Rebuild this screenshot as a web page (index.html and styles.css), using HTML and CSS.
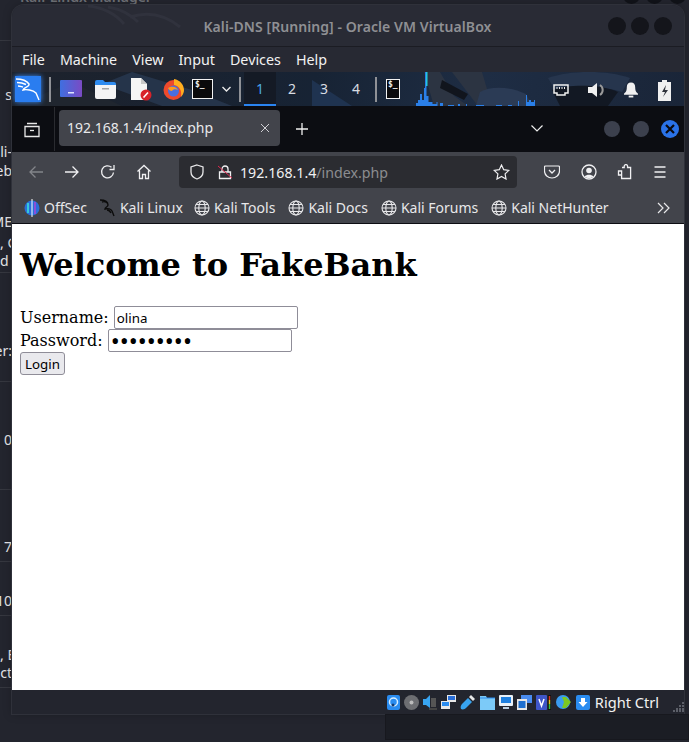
FILE: index.html
```html
<!DOCTYPE html>
<html lang="en">
<head>
<meta charset="utf-8">
<title>Kali-DNS</title>
<link rel="stylesheet" href="styles.css">
</head>
<body>
<div class="desktop">
  <div class="back-title">Kali-Linux Manager</div>
  <div class="back-text t1"><span>s</span></div>
  <div class="back-text t2"><span>ali-</span></div>
  <div class="back-text t3"><span>eb</span></div>
  <div class="back-text t4"><span>ME</span></div>
  <div class="back-text left t5"><span>, C</span></div>
  <div class="back-text left t6"><span>d P</span></div>
  <div class="back-text t7"><span>er:</span></div>
  <div class="back-text t8"><span>: 0</span></div>
  <div class="back-text t9"><span>7</span></div>
  <div class="back-text t10"><span>10</span></div>
  <div class="back-text left t11"><span>, E</span></div>
  <div class="back-text t12"><span>nct</span></div>
  <div class="back-rule r1"></div>
  <div class="back-rule r2"></div>
  <div class="back-rule r3"></div>
  <div class="back-rule r4"></div>
  <div class="back-rule r5"></div>
  <div class="back-rule r6"></div>
  <div class="back-rule r7"></div>
  <div class="back-dots"><i></i><i></i><i></i></div>

  <div class="vm-window">
    <header class="titlebar">
      <svg class="watermark" width="200" height="42" viewBox="0 0 200 42"><path d="M76 1c14 1 28 8 36 18M96 2c12 2 22 7 30 15M118 12c16-5 34-3 50 10" fill="none" stroke="#30323d" stroke-width="3"/></svg>
      <span class="title-text">Kali-DNS [Running] - Oracle VM VirtualBox</span>
      <div class="win-dots"><i></i><i></i><i></i></div>
    </header>
    <nav class="menubar">
      <span>File</span><span>Machine</span><span>View</span><span>Input</span><span>Devices</span><span>Help</span>
    </nav>
    <div class="panel">
      <svg class="panel-art" width="672" height="34" viewBox="0 0 672 34"><path d="M120 0l60 18 40 16h-70L90 12z" fill="#25344a"/><path d="M2 34L60 10l50 24z" fill="#20262f"/><path d="M300 8l40 26h-40z" fill="#1f3350"/><path d="M412 0h16l14 24 14 10h-34zM440 0h30l10 34h-14z" fill="#2c3442"/><path d="M430 8l26 14-4 6-24-12z" fill="#11151d"/><path d="M468 20c10-6 30-6 46 2l6 12h-56z" fill="#2b3b55"/><path d="M536 6c22-8 60-8 82 0l-8 14c-18-6-46-6-66 0z" fill="#26354d"/><path d="M540 18c16-6 50-6 66 2l-10 14h-48z" fill="#121823"/></svg>
      <span class="kali-btn">
        <svg width="26" height="26" viewBox="0 0 26 26"><path d="M1 3c6 0 11 2 13 5 1 3-5 3-6 6 3-1 10 0 13 3l3 7M2 6.500c3 0 6 .5 9 2M3 10c2 0 3 .5 5 1" fill="none" stroke="#fff" stroke-width="1.400"/></svg>
      </span>
      <span class="panel-sep"></span>
      <span class="launch l1">
        <svg width="23" height="18" viewBox="0 0 23 18"><defs><linearGradient id="lg1" x1="0" x2="1"><stop offset="0" stop-color="#3f6fe0"/><stop offset="1" stop-color="#7a4bc4"/></linearGradient></defs><rect width="22" height="17" rx="1" fill="url(#lg1)"/><rect x="8" y="12" width="6" height="1.500" fill="#dfe4ff"/></svg>
      </span>
      <span class="launch l2">
        <svg width="23" height="20" viewBox="0 0 23 20"><path d="M1 3q0-2 2-2h6l2 2h9q2 0 2 2v2H1z" fill="#2f8cf0"/><path d="M1 6h21v12q0 2-2 2H3q-2 0-2-2z" fill="#f4f4f4"/><rect x="8" y="9" width="7" height="1.500" fill="#a5a5a5"/></svg>
      </span>
      <span class="launch l3">
        <svg width="23" height="23" viewBox="0 0 23 23"><path d="M1 0h10l6 6v16H1z" fill="#f5f5f5"/><path d="M11 0l6 6h-6z" fill="#c9c9c9"/><circle cx="16" cy="17" r="5.500" fill="#d8232a"/><path d="M13.500 19.500l4.500-5" stroke="#fff" stroke-width="1.600"/></svg>
      </span>
      <span class="launch l4">
        <svg width="23" height="23" viewBox="0 0 23 23"><circle cx="10.500" cy="12" r="10" fill="#ee4a2c"/><path d="M11 1c6 1 10 6 10 11 0 2-1 5-3 7 1-6-1-11-7-12z" fill="#ffae1f"/><circle cx="10.500" cy="13" r="5.500" fill="#4a6ee0"/><path d="M5 10c3-2 8-2 10 2-2-1-5-1-6 1-2 0-3-1-4-3z" fill="#ff9a1f"/></svg>
      </span>
      <span class="term-ico launch-term">$_</span>
      <svg class="chev" width="9" height="6" viewBox="0 0 9 6"><path d="M.5 1l4 4 4-4" fill="none" stroke="#e8e8e8" stroke-width="1.400"/></svg>
      <span class="panel-sep sep2"></span>
      <span class="ws active">1</span><span class="ws">2</span><span class="ws">3</span><span class="ws">4</span>
      <span class="panel-sep sep3"></span>
      <span class="term-ico narrow">$_</span>
      <svg class="graph" width="125" height="34" viewBox="0 0 125 34"><path d="M0 34v-3h2v-3h2v-6h2v6h2v-12h1V0h1.500v24h2v6h4v2h4v-2h1v4zM24 34v-3h3v3zM32 34v-1h6v1zM42 34v-2h2v2zM50 34v-2h1v2zM60 34v-1h8v1zM80 34v-1h6v1zM92 34v-1h4v1zM102 34v-5h1v5zM110 34v-11h1v7h2v-2h2v2h3v-2h1v6z" fill="#2a7fe8"/><rect x="10" y="0" width="1.500" height="14" fill="#22c8e0"/></svg>
      <span class="tray">
        <svg width="16" height="12" viewBox="0 0 16 12"><path d="M1 1h14v8h-3v2H4V9H1z" fill="none" stroke="#f0f0f0" stroke-width="1.500"/><path d="M4 3v2M6.500 3v2M9 3v2M11.500 3v2" stroke="#f0f0f0"/></svg>
        <svg width="17" height="16" viewBox="0 0 17 16"><path d="M0 5h4l5-4v14l-5-4H0z" fill="#f0f0f0"/><path d="M12 3a6 6 0 0 1 0 10" fill="none" stroke="#9a9a9a" stroke-width="2"/></svg>
        <svg width="14" height="16" viewBox="0 0 15 16"><path d="M7.500 0c3 0 4.500 2 4.500 5 0 4 1 5 3 7v1H0v-1c2-2 3-3 3-7 0-3 1.500-5 4.500-5z" fill="#f0f0f0"/><rect x="5" y="14" width="5" height="2" fill="#f0f0f0"/></svg>
        <svg width="15" height="21" viewBox="0 0 15 21"><path d="M1 2h4V0h5v2h4v19H1z" fill="#f0f0f0"/><path d="M9 5l-4 7h3l-2 5 5-7H8z" fill="#30333b"/></svg>
      </span>
    </div>

    <div class="browser">
      <div class="tabbar">
        <span class="tab-view">
          <svg width="16" height="16" viewBox="0 0 16 16"><path d="M3 1.500h10M1 4.500h14v10H1z" fill="none" stroke="#e8e8e8" stroke-width="1.300"/><path d="M6 8.500h4" stroke="#e8e8e8" stroke-width="1.300"/></svg>
        </span>
        <div class="tab">
          <span class="tab-label">192.168.1.4/index.php</span>
          <svg width="10" height="10" viewBox="0 0 10 10"><path d="M1 1l8 8M9 1l-8 8" stroke="#d0d0d4" stroke-width="1"/></svg>
        </div>
        <svg class="plus" width="14" height="14" viewBox="0 0 14 14"><path d="M7 1v12M1 7h12" stroke="#f0f0f0" stroke-width="1.300"/></svg>
        <svg class="tab-down" width="12" height="7" viewBox="0 0 12 7"><path d="M0.500 0.500l5.500 5.500 5.500-5.500" fill="none" stroke="#eee" stroke-width="1.200"/></svg>
        <div class="ff-dots">
          <i></i><i></i>
          <b><svg width="10" height="10" viewBox="0 0 10 10"><path d="M1 1l8 8M9 1l-8 8" stroke="#0a0a0e" stroke-width="2.200"/></svg></b>
        </div>
      </div>
      <div class="navbar">
        <svg class="nav-ico first" width="16" height="14" viewBox="0 0 16 14"><path d="M15 7H2M7.500 1.500L2 7l5.500 5.500" fill="none" stroke="#83858a" stroke-width="1.300"/></svg>
        <svg class="nav-ico" width="16" height="14" viewBox="0 0 16 14"><path d="M1 7h13M8.500 1.500L14 7l-5.500 5.500" fill="none" stroke="#f0f0f2" stroke-width="1.300"/></svg>
        <svg class="nav-ico" width="16" height="16" viewBox="0 0 16 16"><path d="M13.500 8.500a6 6 0 1 1-2-5.200M14 1v4.500H9.500" fill="none" stroke="#f0f0f2" stroke-width="1.300"/></svg>
        <svg class="nav-ico" width="16" height="16" viewBox="0 0 16 16"><path d="M1.500 7.500L8 1.500l6.500 6M3.500 6.500v8h3v-4h3v4h3v-8" fill="none" stroke="#f0f0f2" stroke-width="1.300"/></svg>
        <div class="urlbar">
          <svg width="16" height="16" viewBox="0 0 16 16"><path d="M8 1l6 2v5c0 3.500-3 6-6 7-3-1-6-3.500-6-7V3z" fill="none" stroke="#e8e8ea" stroke-width="1.300"/></svg>
          <svg class="lock" width="16" height="16" viewBox="0 0 16 16"><path d="M5 8V5a3 3 0 0 1 6 0v3M2.500 8h11v6.500h-11z" fill="none" stroke="#f0f0f2" stroke-width="1.300"/><path d="M1 2l14 12" stroke="#e22850" stroke-width="1"/></svg>
          <span class="url"><span class="host">192.168.1.4</span><span class="path">/index.php</span></span>
          <svg class="star" width="17" height="16" viewBox="0 0 17 16"><path d="M8.500 1l2.200 4.700 5.100.7-3.700 3.500.9 5.100-4.500-2.500L4 15l.9-5.100L1.200 6.400l5.100-.7z" fill="none" stroke="#f0f0f2" stroke-width="1.200"/></svg>
        </div>
        <svg class="nav-ico pocket" width="16" height="14" viewBox="0 0 16 14"><path d="M1.500 1h13q1 0 1 1v4c0 4-3.500 7-7.500 7S.5 10 .5 6V2q0-1 1-1z" fill="none" stroke="#f0f0f2" stroke-width="1.200"/><path d="M5 5l3 3 3-3" fill="none" stroke="#f0f0f2" stroke-width="1.300"/></svg>
        <svg class="nav-ico" width="16" height="16" viewBox="0 0 16 16"><circle cx="8" cy="8" r="7" fill="none" stroke="#f0f0f2" stroke-width="1.300"/><circle cx="8" cy="6.500" r="2.800" fill="#f0f0f2"/><path d="M3.500 12.500c2-2.500 7-2.500 9 0-2 2-7 2-9 0z" fill="#f0f0f2"/></svg>
        <svg class="nav-ico" width="16" height="16" viewBox="0 0 16 16"><path d="M5 3.500h2.200V2.300a1.700 1.700 0 0 1 3.400 0v1.200h3v11h-9V11H1.500V7H4.600v3.500" fill="none" stroke="#f0f0f2" stroke-width="1.300"/></svg>
        <svg class="nav-ico" width="14" height="12" viewBox="0 0 14 12"><path d="M1.500 1h11M1.500 6h11M1.500 11h11" stroke="#f0f0f2" stroke-width="1.300"/></svg>
      </div>
      <div class="bookmarks">
        <span class="bm">
          <svg width="16" height="18" viewBox="0 0 16 18"><circle cx="8" cy="9" r="7.500" fill="#2a6fd8"/><path d="M8 0v18" stroke="#fff" stroke-width="1"/><path d="M11 3v12" stroke="#8a4fd8" stroke-width="2"/><path d="M4 4v10" stroke="#36c8d8" stroke-width="2"/></svg>OffSec
        </span>
        <span class="bm">
          <svg width="17" height="18" viewBox="0 0 17 18"><path d="M1 1c5 0 8 2 8 5 0 2-3 2-3 4 3-1 6 0 7 2l2 5M3 3c2-1 5 0 6 2M8 11c2 0 3 1 4 3" fill="none" stroke="#0c0c0c" stroke-width="1.400"/></svg>Kali Linux
        </span>
        <span class="bm"><svg class="globe" width="16" height="16" viewBox="0 0 16 16"><use href="#globe"/></svg>Kali Tools</span>
        <span class="bm"><svg class="globe" width="16" height="16" viewBox="0 0 16 16"><use href="#globe"/></svg>Kali Docs</span>
        <span class="bm"><svg class="globe" width="16" height="16" viewBox="0 0 16 16"><use href="#globe"/></svg>Kali Forums</span>
        <span class="bm"><svg class="globe" width="16" height="16" viewBox="0 0 16 16"><use href="#globe"/></svg>Kali NetHunter</span>
        <svg class="more" width="13" height="12" viewBox="0 0 13 12"><path d="M1 1l5 5-5 5M7 1l5 5-5 5" fill="none" stroke="#e8e8ea" stroke-width="1.200"/></svg>
      </div>
      <main class="page">
        <h1>Welcome to FakeBank</h1>
        <form class="login">
          <label>Username: <input type="text" value="olina"></label><br>
          <label>Password: <input class="secret" type="password" value="123456789"></label><br>
          <button type="button">Login</button>
        </form>
      </main>
    </div>

    <footer class="statusbar">
      <span class="st-icons">
        <svg width="13" height="15" viewBox="0 0 13 15"><rect width="13" height="15" rx="2" fill="#2a8cf0"/><circle cx="6.500" cy="7" r="4" fill="none" stroke="#d8eeff" stroke-width="1.500"/><circle cx="6" cy="10" r="1.500" fill="#143a70"/></svg>
        <svg width="15" height="15" viewBox="0 0 15 15"><circle cx="7.500" cy="7.500" r="7.500" fill="#6d6e72"/><circle cx="7.500" cy="7.500" r="2" fill="#bcbcbc"/></svg>
        <svg width="14" height="15" viewBox="0 0 14 15"><path d="M0 4h3l4-4v13L3 10H0z" fill="#38a4f0"/><rect x="8" y="3" width="5" height="9" fill="#555"/><rect x="6" y="13" width="8" height="2" fill="#444"/></svg>
        <svg width="15" height="14" viewBox="0 0 15 14"><rect x="6" y="0" width="9" height="7" fill="#e8e8e8"/><rect x="7" y="1" width="7" height="4" fill="#2a6fd8"/><rect x="0" y="6" width="9" height="8" fill="#e8e8e8"/><rect x="1" y="7" width="7" height="4" fill="#2a8cf0"/></svg>
        <svg width="16" height="16" viewBox="0 0 16 16"><path d="M1 15c-1-2 0-4 1-5l6-6 4 4-6 6c-1 1-3 2-5 1z" fill="#38a4f0"/><path d="M9 3l2-2 4 4-2 2z" fill="#e8e8e8"/></svg>
        <svg width="15" height="15" viewBox="0 0 15 15"><path d="M0 1h6l1 2h8v12H0z" fill="#7ccaf8"/><path d="M0 3h15" stroke="#2a8cf0"/></svg>
        <svg width="14" height="15" viewBox="0 0 14 15"><rect width="14" height="11" rx="1" fill="#e8f0f8"/><rect x="2" y="2" width="10" height="6" fill="#1e7fe0"/><rect x="4" y="12" width="6" height="2" fill="#bcd"/></svg>
        <svg width="15" height="15" viewBox="0 0 15 15"><rect x="4" width="11" height="8" fill="#4a8cf0"/><rect y="4" width="10" height="11" fill="#e8e8e8"/><rect x="1.500" y="6" width="7" height="7" fill="#1e6fd0"/></svg>
        <svg width="16" height="15" viewBox="0 0 16 15"><rect width="11" height="15" rx="1" fill="#3f56c8"/><path d="M3 4l2.500 7L8 4" fill="none" stroke="#fff" stroke-width="1.500"/><rect x="12" width="3" height="15" fill="#111"/><path d="M13.500 1v4" stroke="#d83020" stroke-width="1.500"/><path d="M13.500 5v4" stroke="#e8c020" stroke-width="1.500"/><path d="M13.500 9v5" stroke="#30c040" stroke-width="1.500"/></svg>
        <svg width="16" height="16" viewBox="0 0 16 16"><circle cx="7" cy="8" r="7" fill="#3a9cf0"/><path d="M6 3l4 0 5 5-5 6H6l2-6z" fill="#7cc820"/></svg>
        <svg width="14" height="15" viewBox="0 0 14 15"><rect width="14" height="15" rx="2" fill="#2a8cf0"/><path d="M5 3h4v4h2.500L7 12 2.500 7H5z" fill="#fff"/></svg>
      </span>
      <span class="hostkey">Right Ctrl</span>
      <svg class="grip" width="11" height="11" viewBox="0 0 11 11"><path d="M9 1h2v2H9zM6 4h2v2H6zM9 4h2v2H9zM3 7h2v2H3zM6 7h2v2H6zM9 7h2v2H9zM0 9h2v2H0zM3 9h2v2H3zM6 9h2v2H6zM9 9h2v2H9z" fill="#5c5f68"/></svg>
    </footer>
  </div>
</div>
<svg class="defs" width="0" height="0"><defs><g id="globe"><circle cx="8" cy="8" r="7" fill="none" stroke="#e8e8ea" stroke-width="1.100"/><ellipse cx="8" cy="8" rx="3.200" ry="7" fill="none" stroke="#e8e8ea" stroke-width="1.100"/><path d="M1 8h14M2 4.500h12M2 11.500h12" stroke="#e8e8ea" stroke-width="1"/></g></defs></svg>
</body>
</html>
```
FILE: styles.css
```css
* { box-sizing: border-box; }
html, body { margin: 0; padding: 0; height: 100%; overflow: hidden; }
body { background: #23252e; font-family: "Noto Sans", sans-serif; }
.defs { position: absolute; }
.desktop { position: relative; width: 689px; height: 742px; overflow: hidden; background: #23252e; }

.back-title { position: absolute; left: 20px; top: -13px; color: #6f7177; font-size: 14px; font-weight: 600; }
.back-text { position: absolute; left: 0; width: 12px; display: flex; justify-content: flex-end; overflow: hidden; color: #e4e4e6; font-size: 14px; line-height: 16px; white-space: nowrap; }
.back-text.left { justify-content: flex-start; }
.back-text span { flex: none; }
.t1 { top: 87px; }
.t2 { top: 144px; }
.t3 { top: 163px; }
.t4 { top: 214px; }
.t5 { top: 235px; }
.t6 { top: 253px; }
.t7 { top: 343px; }
.t8 { top: 432px; }
.t9 { top: 539px; }
.t10 { top: 593px; }
.t11 { top: 647px; }
.t12 { top: 665px; }
.back-rule { position: absolute; left: 0; width: 12px; height: 1px; background: #35373f; }
.r1 { top: 40px; }
.r2 { top: 272px; }
.r3 { top: 381px; }
.r4 { top: 489px; }
.r5 { top: 561px; }
.r6 { top: 615px; }
.r7 { top: 687px; }
.back-dots { position: absolute; right: 3px; top: -13px; display: flex; gap: 6px; }
.back-dots i { width: 17px; height: 17px; border-radius: 50%; background: #111319; }

.vm-window { position: absolute; left: 12px; top: 5px; width: 672px; height: 709px; display: flex; flex-direction: column; background: #23252e; border-radius: 12px 12px 0 0; box-shadow: 0 0 0 1px #2f313a, 0 0 10px rgba(0,0,0,.25); }
.vm-window::after { content: ""; position: absolute; left: 373px; right: -5px; top: 709px; height: 24px; background: #1b1d24; border: 1px solid #17181e; }

.titlebar { height: 42px; flex: none; position: relative; display: flex; align-items: center; justify-content: center; border-bottom: 1px solid #1b1c23; background: #292b35; border-radius: 12px 12px 0 0; overflow: hidden; }
.watermark { position: absolute; left: 0; top: 0; }
.title-text { position: relative; color: #8f9094; font-size: 14px; font-weight: 600; letter-spacing: .07px; margin-left: -1px; padding-top: 1px; }
.win-dots { position: absolute; right: 12px; top: 12px; display: flex; gap: 5px; }
.win-dots i { width: 18px; height: 18px; border-radius: 50%; background: #14151b; }

.menubar { height: 25px; flex: none; display: flex; align-items: center; padding-left: 10px; gap: 15px; background: #272933; color: #f2f2f2; font-size: 14.3px; }
.menubar span { line-height: 20px; }

.panel { height: 34px; flex: none; position: relative; display: flex; align-items: center; padding-left: 3px; background: #1a2333 linear-gradient(100deg, #1d222c 0%, #172334 45%, #1e2d44 70%, #1a2538 100%); overflow: hidden; }
.panel > * { position: relative; }
.panel > .panel-art { position: absolute; left: 0; top: 0; }
.kali-btn { width: 26px; height: 26px; flex: none; background: #2a7df0; box-shadow: 0 0 5px #3a8af5; display: flex; }
.panel-sep { width: 2px; height: 25px; background: #8f9196; flex: none; margin: 0 9px 0 8px; }
.launch { width: 23px; flex: none; display: flex; align-items: center; justify-content: center; }
.l1 { margin-right: 11px; }
.l2 { margin-right: 13px; }
.l3 { margin-right: 10px; }
.l4 { margin-right: 6px; }
.term-ico { display: block; width: 21px; height: 20px; flex: none; background: #0a0a0c; border: 1px solid #f2f2f2; color: #f2f2f2; font: bold 8px/10px "DejaVu Sans Mono", monospace; padding-left: 2px; }
.term-ico.narrow { width: 14px; padding-left: 1px; }
.chev { flex: none; margin-left: 9px; margin-right: 8px; }
.sep2 { margin: 0 3px 0 0; }
.ws { width: 32px; height: 34px; flex: none; color: #d8dce2; font-size: 14px; line-height: 34px; text-align: center; }
.ws.active { border-bottom: 2px solid #2a84f0; background: #141a25; color: #4aa8e8; }
.sep3 { margin: 0 9px 0 3px; }
.panel > .graph { position: absolute; left: 404px; top: 0; }
.panel > .tray { position: absolute; right: 12px; top: 6px; display: flex; align-items: center; gap: 19px; height: 24px; }

.browser { flex: 1; min-height: 0; display: flex; flex-direction: column; }
.tabbar { height: 46px; flex: none; display: flex; align-items: center; position: relative; background: #0c0d12; }
.tab-view { width: 43px; height: 44px; margin-right: 4px; flex: none; padding-left: 12px; padding-top: 1px; display: flex; align-items: center; border-right: 1px solid #2a2b30; }
.tab { width: 221px; height: 36px; flex: none; margin-top: -3px; display: flex; align-items: center; justify-content: space-between; padding: 0 10px 0 8px; background: #42444b; border-radius: 4px; color: #e8e8ea; font-size: 14px; }
.plus { flex: none; margin-left: 15px; }
.tab-down { position: absolute; left: 519px; top: 19px; }
.ff-dots { position: absolute; right: 5px; top: 14px; display: flex; align-items: center; gap: 13px; }
.ff-dots i { width: 16px; height: 16px; border-radius: 50%; background: #3c404d; }
.ff-dots b { width: 18px; height: 18px; margin-left: -1px; border-radius: 50%; background: #2a72e8; display: flex; align-items: center; justify-content: center; }

.navbar { height: 40px; flex: none; display: flex; align-items: center; padding-left: 16px; background: #42444b; }
.nav-ico { flex: none; margin-right: 20px; }
.urlbar { width: 338px; height: 32px; flex: none; margin: 0 27px 0 7px; display: flex; align-items: center; padding: 0 7px 0 10px; background: #2b2c31; border-radius: 4px; color: #f0f0f2; }
.lock { margin-left: 12px; }
.url { flex: 1; margin-left: 7px; font-size: 14.2px; white-space: nowrap; }
.path { color: #8b8c90; }
.star { flex: none; }
.pocket { margin-right: 21px; }

.bookmarks { height: 32px; flex: none; display: flex; align-items: center; padding-left: 12px; gap: 13px; background: #42444b; color: #e8e8ea; font-size: 14px; position: relative; border-bottom: 1px solid #0c0d12; }
.bm { display: flex; align-items: center; gap: 4px; white-space: nowrap; }
.bm:first-child { margin-right: -1px; }
.bm:nth-child(2) { margin-right: -2px; }
.more { position: absolute; right: 14px; top: 10px; }

.page { flex: 1; min-height: 0; background: #fff; padding: 8px; color: #000; font-family: "DejaVu Serif", serif; font-size: 16px; line-height: normal; }
.page h1 { margin: 14px 0 22px; font-size: 32px; font-weight: bold; line-height: 38px; }
.login { margin: 0; line-height: 23px; }
.login input { width: 184px; height: 23px; padding: 1px 2px; margin: 0; border: 1px solid #8f8d98; border-radius: 2px; background: #fff; color: #000; font: 13.33px "Noto Sans", sans-serif; vertical-align: top; }
.login input.secret { padding: 0 2px; font-size: 24px; }
.login button { width: 45px; height: 23px; padding: 0 4px; margin: 0; border: 1px solid #8f8d98; border-radius: 3px; background: #e9e9ed; color: #000; font: 13.33px "Noto Sans", sans-serif; vertical-align: top; }

.statusbar { height: 24px; flex: none; position: relative; display: flex; align-items: center; justify-content: flex-end; padding-right: 25px; background: #23252e; }
.st-icons { display: flex; align-items: center; gap: 4px; margin-right: 5px; }
.hostkey { color: #f2f2f2; font-size: 14.6px; }
.grip { position: absolute; right: 0; bottom: 2px; }
```
